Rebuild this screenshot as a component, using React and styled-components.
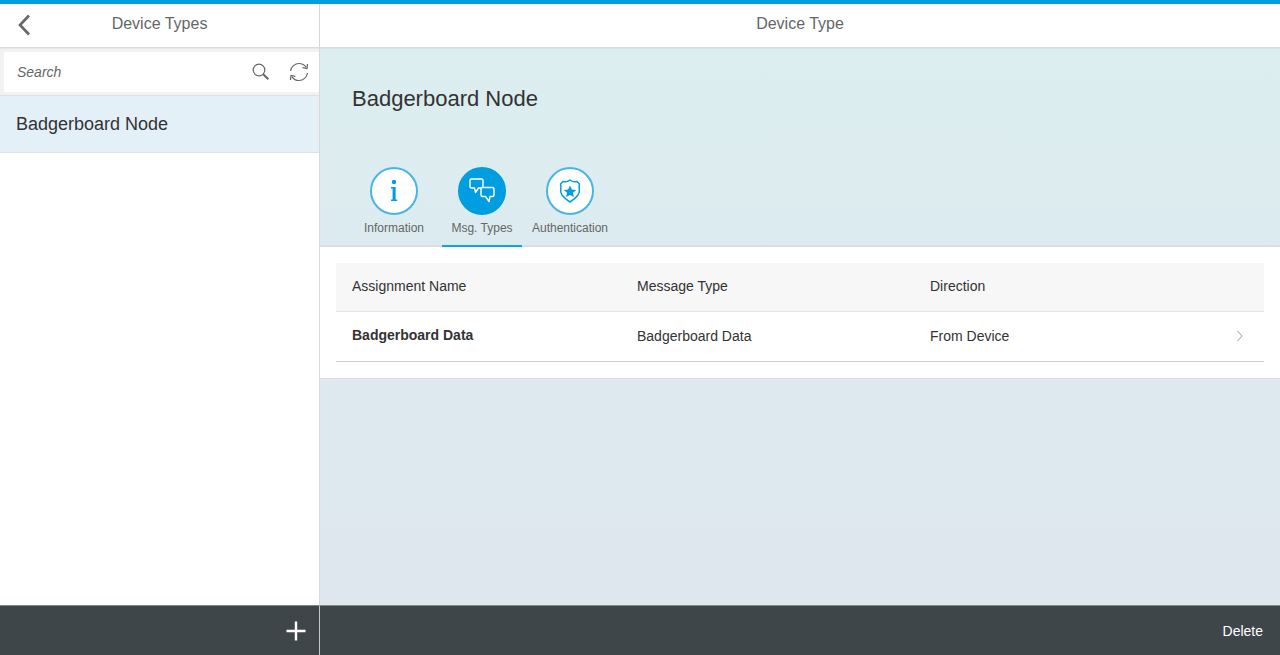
import React from 'react'
import styled, { createGlobalStyle } from 'styled-components'

const GlobalStyle = createGlobalStyle`
  html, body { margin: 0; padding: 0; height: 100%; }
  body { font-family: "Liberation Sans", Arial, sans-serif; color: #333; background: #fff; }
  #root { height: 100%; }
`

const Shell = styled.div`
  height: 655px;
  display: flex;
  flex-direction: column;
  border-top: 4px solid #009de0;
  box-sizing: border-box;
  overflow: hidden;
`
const Panes = styled.div`
  flex: 1;
  display: flex;
  min-height: 0;
`
const Master = styled.div`
  width: 320px;
  flex: none;
  display: flex;
  flex-direction: column;
  box-sizing: border-box;
  border-right: 1px solid #d9d9d9;
  background: #fff;
`
const Detail = styled.div`
  flex: 1;
  display: flex;
  flex-direction: column;
  min-width: 0;
`
const Header = styled.div`
  height: 44px;
  flex: none;
  box-sizing: border-box;
  border-bottom: 1px solid #dcdcdc;
  box-shadow: 0 1px 1px rgba(0, 0, 0, 0.04);
  position: relative;
  display: flex;
  align-items: center;
  justify-content: center;
  padding-bottom: 3px;
  font-size: 16px;
  color: #666;
  background: #fff;
  z-index: 1;
`
const BackButton = styled.button`
  position: absolute;
  left: 16px;
  top: 9px;
  width: 18px;
  height: 24px;
  border: 0;
  padding: 0;
  background: none;
  display: flex;
`
const SearchBar = styled.div`
  height: 48px;
  flex: none;
  box-sizing: border-box;
  padding: 4px 0 3px 4px;
  background: #f2f2f2;
  border-bottom: 1px solid #e0e0e0;
`
const SearchField = styled.div`
  height: 40px;
  background: #fff;
  display: flex;
  align-items: center;
  padding-left: 13px;
  padding-right: 10px;
  font-size: 14px;
  font-style: italic;
  color: #666;
`
const Placeholder = styled.span`
  flex: 1;
`
const SearchIcons = styled.div`
  display: flex;
  align-items: center;
  gap: 19px;
`
const ListItem = styled.div`
  height: 57px;
  flex: none;
  box-sizing: border-box;
  display: flex;
  align-items: center;
  padding: 1px 16px 0;
  font-size: 18px;
  color: #333;
  background: #e4f0f8;
  border-bottom: 1px solid #e0e0e0;
`
const Spacer = styled.div`
  flex: 1;
`
const Footer = styled.div`
  height: 50px;
  flex: none;
  box-sizing: border-box;
  background: #3f4649;
  border-top: 1px solid #7d8689;
  display: flex;
  align-items: center;
  justify-content: flex-end;
  color: #fff;
`
const MasterFooter = styled(Footer)`
  padding-right: 13px;
  border-right: 1px solid #c4c9cb;
  margin-right: -1px;
  position: relative;
`
const DetailFooter = styled(Footer)`
  padding-right: 17px;
  font-size: 14px;
`
const Page = styled.div`
  flex: 1;
  display: flex;
  flex-direction: column;
  min-height: 0;
  background: linear-gradient(to bottom, #dceef0 0%, #dee6ee 100%);
`
const ObjectHeader = styled.div`
  height: 199px;
  flex: none;
  box-sizing: border-box;
  display: flex;
  flex-direction: column;
`
const Title = styled.h1`
  margin: 0;
  padding: 37px 32px 0;
  height: 119px;
  flex: none;
  box-sizing: border-box;
  font-size: 22px;
  line-height: 28px;
  font-weight: 400;
  color: #333;
`
const TabBar = styled.div`
  height: 80px;
  flex: none;
  display: flex;
  padding-left: 34px;
  gap: 8px;
  box-sizing: border-box;
  border-bottom: 2px solid #dcdddf;
`
const Tab = styled.div`
  width: 80px;
  height: 80px;
  flex: none;
  box-sizing: border-box;
  display: flex;
  flex-direction: column;
  align-items: center;
  border-bottom: ${p => (p.$active ? '2px solid #0aa5e6' : '0')};
  font-size: 12px;
  color: #666;
  white-space: nowrap;
`
const TabCircle = styled.div`
  width: 48px;
  height: 48px;
  box-sizing: border-box;
  border-radius: 50%;
  border: 2px solid ${p => (p.$active ? '#009de0' : '#46b6ea')};
  background: ${p => (p.$active ? '#009de0' : '#fff')};
  display: flex;
  align-items: center;
  justify-content: center;
  margin-bottom: 6px;
`
const TablePanel = styled.div`
  height: 132px;
  flex: none;
  box-sizing: border-box;
  background: #fff;
  padding: 16px 16px 16px;
  border-bottom: 1px solid #dcdddf;
`
const Row = styled.div`
  display: grid;
  grid-template-columns: 285px 293px 1fr 28px;
  padding-left: 16px;
  padding-bottom: 2px;
  align-items: center;
  box-sizing: border-box;
  font-size: 14px;
  color: #333;
`
const HeadRow = styled(Row)`
  height: 49px;
  background: #f7f7f7;
  border-bottom: 1px solid #e5e5e5;
`
const BodyRow = styled(Row)`
  height: 50px;
  border-bottom: 1px solid #cfcfcf;
`
const StrongCell = styled.span`
  font-weight: 700;
  position: relative;
  top: -1px;
`

const BackIcon = () => (
  <svg width="18" height="24" viewBox="0 0 18 24" fill="none" stroke="#666" strokeWidth="2.6">
    <path d="M13 2.5 L4 12 L13 21.5" />
  </svg>
)

const SearchIcon = () => (
  <svg width="18" height="18" viewBox="0 0 18 18" fill="none" stroke="#666" strokeWidth="1.2">
    <circle cx="7" cy="7" r="5.8" />
    <path d="M11.2 11.2 L16.4 16.2" strokeWidth="2" />
  </svg>
)

const RefreshIcon = () => (
  <svg width="20" height="20" viewBox="0 0 20 20" fill="none" stroke="#666" strokeWidth="1.2">
    <path d="M1.5 9 C2.2 4.6 5.8 1.5 10 1.5 C13 1.5 15.6 3 17.2 5.4" />
    <path d="M18.5 2 L18 6.5 L13.6 5.6" />
    <path d="M18.5 11 C17.8 15.4 14.2 18.5 10 18.5 C7 18.5 4.4 17 2.8 14.6" />
    <path d="M1.5 18 L2 13.5 L6.4 14.4" />
  </svg>
)

const InfoIcon = () => (
  <svg width="12" height="26" viewBox="0 0 12 26" fill="#009de0">
    <circle cx="6" cy="4" r="2.2" />
    <path d="M3 9 H7.6 V21.6 H9.2 V23 H3 V21.6 H4.6 V10.4 H3 Z" />
  </svg>
)

const BubblesIcon = () => (
  <svg width="26" height="26" viewBox="0 0 26 26" fill="none" stroke="#fff" strokeWidth="1.4" strokeLinejoin="round">
    <path d="M2.5 1 H12.5 Q14 1 14 2.5 V8.5 Q14 10 12.5 10 H9.5 L6.5 14.5 L5.5 10 H2.5 Q1 10 1 8.5 V2.5 Q1 1 2.5 1 Z" fill="#009de0" />
    <path d="M13.5 9.5 H23.5 Q25 9.5 25 11 V17 Q25 18.5 23.5 18.5 H21 L20 23.5 L16.5 18.5 H13.5 Q12 18.5 12 17 V11 Q12 9.5 13.5 9.5 Z" fill="#009de0" />
  </svg>
)

const BadgeIcon = () => (
  <svg width="22" height="24" viewBox="0 0 22 24">
    <path
      d="M11 1 Q14 3.5 18 2.5 L20.5 5 Q19.8 7 20.2 9 Q21 13 19 16 Q16 20 11 23 Q6 20 3 16 Q1 13 1.8 9 Q2.2 7 1.5 5 L4 2.5 Q8 3.5 11 1 Z"
      fill="none"
      stroke="#009de0"
      strokeWidth="1.5"
      strokeLinejoin="round"
    />
    <path d="M11 6.5 L12.9 10.4 L17.2 10.9 L14 13.8 L14.9 18 L11 15.9 L7.1 18 L8 13.8 L4.8 10.9 L9.1 10.4 Z" fill="#009de0" />
  </svg>
)

const ChevronIcon = () => (
  <svg width="8" height="12" viewBox="0 0 8 12" fill="none" stroke="#b0b0b0" strokeWidth="1.1">
    <path d="M1.5 1 L6 6 L1.5 11" />
  </svg>
)

const PlusIcon = () => (
  <svg width="20" height="20" viewBox="0 0 20 20" fill="#fff">
    <path d="M8.8 0.5 H11.2 V8.8 H19.5 V11.2 H11.2 V19.5 H8.8 V11.2 H0.5 V8.8 H8.8 Z" />
  </svg>
)

const tabs = [
  { label: 'Information', icon: <InfoIcon /> },
  { label: 'Msg. Types', icon: <BubblesIcon />, active: true },
  { label: 'Authentication', icon: <BadgeIcon /> },
]

export default function App() {
  return (
    <>
      <GlobalStyle />
      <Shell>
        <Panes>
          <Master>
            <Header>
              <BackButton><BackIcon /></BackButton>
              Device Types
            </Header>
            <SearchBar>
              <SearchField>
                <Placeholder>Search</Placeholder>
                <SearchIcons>
                  <SearchIcon />
                  <RefreshIcon />
                </SearchIcons>
              </SearchField>
            </SearchBar>
            <ListItem>Badgerboard Node</ListItem>
            <Spacer />
            <MasterFooter><PlusIcon /></MasterFooter>
          </Master>
          <Detail>
            <Header>Device Type</Header>
            <Page>
              <ObjectHeader>
                <Title>Badgerboard Node</Title>
                <TabBar>
                  {tabs.map(t => (
                    <Tab key={t.label} $active={t.active}>
                      <TabCircle $active={t.active}>{t.icon}</TabCircle>
                      {t.label}
                    </Tab>
                  ))}
                </TabBar>
              </ObjectHeader>
              <TablePanel>
                <HeadRow>
                  <span>Assignment Name</span>
                  <span>Message Type</span>
                  <span>Direction</span>
                </HeadRow>
                <BodyRow>
                  <StrongCell>Badgerboard Data</StrongCell>
                  <span>Badgerboard Data</span>
                  <span>From Device</span>
                  <ChevronIcon />
                </BodyRow>
              </TablePanel>
              <Spacer />
            </Page>
            <DetailFooter>Delete</DetailFooter>
          </Detail>
        </Panes>
      </Shell>
    </>
  )
}
